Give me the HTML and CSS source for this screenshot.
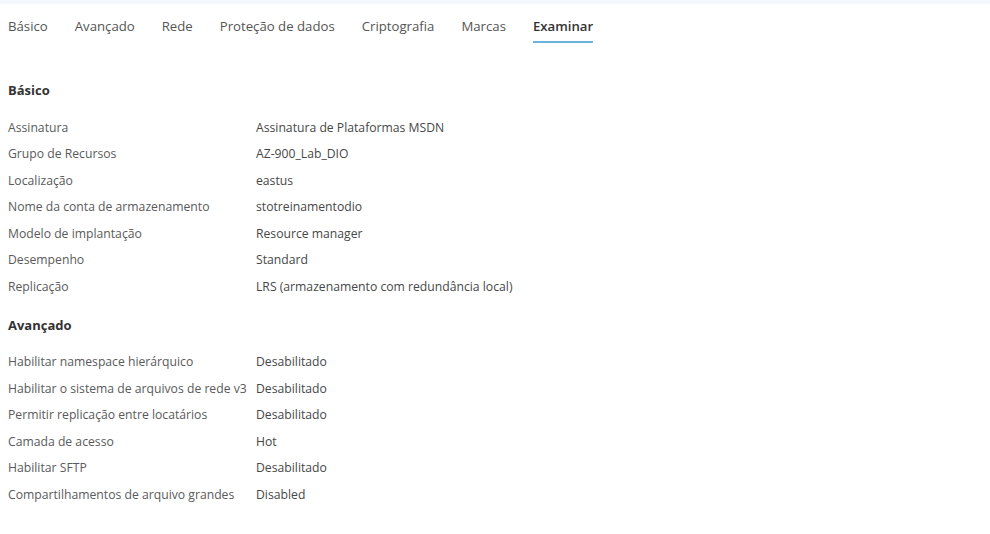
FILE: index.html
```html
<!DOCTYPE html>
<html lang="pt">
<head>
<meta charset="utf-8">
<title>Examinar</title>
<link rel="stylesheet" href="styles.css">
</head>
<body>
<div class="topband"></div>
<nav class="tabs">
  <span class="tab">Básico</span>
  <span class="tab">Avançado</span>
  <span class="tab">Rede</span>
  <span class="tab">Proteção de dados</span>
  <span class="tab">Criptografia</span>
  <span class="tab">Marcas</span>
  <span class="tab active">Examinar</span>
</nav>
<main class="content">
  <section class="section">
    <h2 class="heading">Básico</h2>
    <div class="grid">
      <div class="label">Assinatura</div><div class="value">Assinatura de Plataformas MSDN</div>
      <div class="label">Grupo de Recursos</div><div class="value">AZ-900_Lab_DIO</div>
      <div class="label">Localização</div><div class="value">eastus</div>
      <div class="label">Nome da conta de armazenamento</div><div class="value">stotreinamentodio</div>
      <div class="label">Modelo de implantação</div><div class="value">Resource manager</div>
      <div class="label">Desempenho</div><div class="value">Standard</div>
      <div class="label">Replicação</div><div class="value">LRS (armazenamento com redundância local)</div>
    </div>
  </section>
  <section class="section">
    <h2 class="heading">Avançado</h2>
    <div class="grid">
      <div class="label">Habilitar namespace hierárquico</div><div class="value">Desabilitado</div>
      <div class="label">Habilitar o sistema de arquivos de rede v3</div><div class="value">Desabilitado</div>
      <div class="label">Permitir replicação entre locatários</div><div class="value">Desabilitado</div>
      <div class="label">Camada de acesso</div><div class="value">Hot</div>
      <div class="label">Habilitar SFTP</div><div class="value">Desabilitado</div>
      <div class="label">Compartilhamentos de arquivo grandes</div><div class="value">Disabled</div>
    </div>
  </section>
</main>
</body>
</html>
```
FILE: styles.css
```css
html, body {
  margin: 0;
  padding: 0;
  background: #ffffff;
}
body {
  font-family: "Open Sans", "Noto Sans", sans-serif;
  color: #4a4a4a;
}
.topband {
  height: 4px;
  background: #f3f8fe;
}
.tabs {
  display: flex;
  gap: 27px;
  padding: 13px 0 0 8px;
}
.tab {
  font-size: 13.2px;
  line-height: 19px;
  color: #555;
  padding-bottom: 5px;
  border-bottom: 2px solid transparent;
}
.tab.active {
  color: #333;
  font-weight: 600;
  border-bottom-color: #6cb2de;
}
.content {
  padding: 38px 0 0 8px;
}
.section + .section {
  margin-top: 16px;
}
.heading {
  margin: 0 0 15px;
  font-size: 13px;
  font-weight: 700;
  line-height: 18px;
  color: #333;
}
.grid {
  display: grid;
  grid-template-columns: 248px auto;
  grid-auto-rows: 26.5px;
  align-items: center;
  font-size: 12.2px;
}
.label {
  color: #5a5a5a;
}
.value {
  color: #474747;
}
```
